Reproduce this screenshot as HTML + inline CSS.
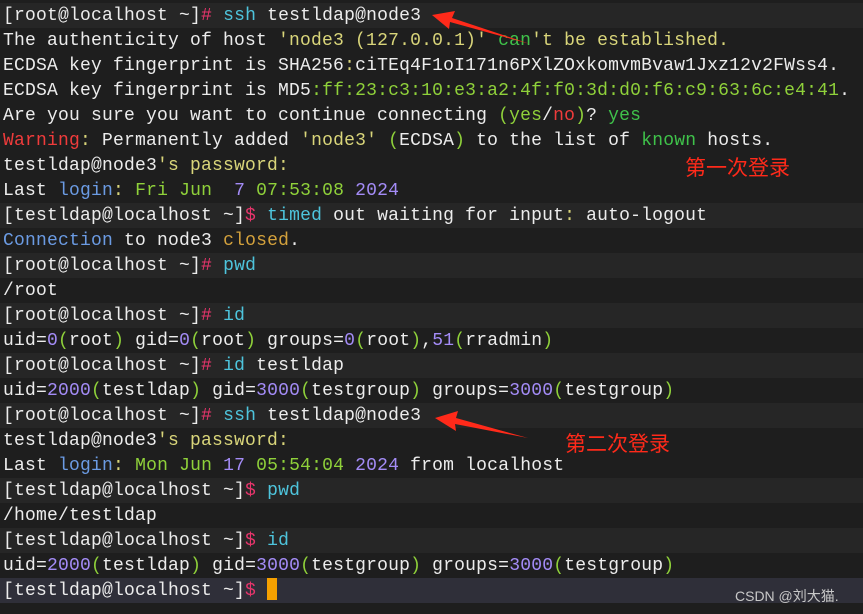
<!DOCTYPE html>
<html><head><meta charset="utf-8"><style>
body{margin:0;width:863px;height:614px;background:#1e1e1e;overflow:hidden;position:relative}
.t{position:absolute;left:0;top:3px;width:863px;font-family:"Liberation Mono",monospace;font-size:18px;letter-spacing:0.2px;color:#ececec}
.l{height:25px;line-height:26px;white-space:pre;padding-left:3px}
.b{background:#262626}
.c{background:#2f2f39}
.p{color:#e8356c}.k{color:#4ec4dc}.y{color:#d9d57a}.g{color:#8fd13a}.gr{color:#3fc24a}.r{color:#ef3b3b}.bl{color:#6b9be3}.pu{color:#a48cf7}.o{color:#d3a13c}
.cur{display:inline-block;width:10px;height:22px;background:#f5a000;vertical-align:-5px}
.cn{position:absolute;color:#ff2a1a;font-family:"Noto Sans CJK SC",sans-serif;font-size:21px;line-height:1}
.wm{position:absolute;left:735px;top:586px;color:#c8c8c8;font-family:"Liberation Sans","Noto Sans CJK SC",sans-serif;font-size:14px}
</style></head><body>
<div class="t">
<div class="l b">[root@localhost ~]<span class="p">#</span> <span class="k">ssh</span> testldap@node3</div>
<div class="l">The authenticity of host <span class="y">'node3 (127.0.0.1)'</span> <span class="gr">can</span><span class="y">'t be established.</span></div>
<div class="l">ECDSA key fingerprint is SHA256<span class="y">:</span>ciTEq4F1oI171n6PXlZOxkomvmBvaw1Jxz12v2FWss4.</div>
<div class="l">ECDSA key fingerprint is MD5<span class="g">:ff:23:c3:10:e3:a2:4f:f0:3d:d0:f6:c9:63:6c:e4:41</span>.</div>
<div class="l">Are you sure you want to continue connecting <span class="g">(yes</span>/<span class="r">no</span><span class="g">)</span>? <span class="gr">yes</span></div>
<div class="l"><span class="r">Warning</span><span class="y">:</span> Permanently added <span class="y">'node3'</span> <span class="g">(</span>ECDSA<span class="g">)</span> to the list of <span class="gr">known</span> hosts.</div>
<div class="l">testldap@node3<span class="y">'s password:</span></div>
<div class="l">Last <span class="bl">login</span><span class="y">:</span> <span class="g">Fri Jun</span>  <span class="pu">7</span> <span class="g">07:53:08</span> <span class="pu">2024</span></div>
<div class="l b">[testldap@localhost ~]<span class="p">$</span> <span class="k">timed</span> out waiting for input<span class="y">:</span> auto-logout</div>
<div class="l"><span class="bl">Connection</span> to node3 <span class="o">closed</span>.</div>
<div class="l b">[root@localhost ~]<span class="p">#</span> <span class="k">pwd</span></div>
<div class="l">/root</div>
<div class="l b">[root@localhost ~]<span class="p">#</span> <span class="k">id</span></div>
<div class="l">uid=<span class="pu">0</span><span class="g">(</span>root<span class="g">)</span> gid=<span class="pu">0</span><span class="g">(</span>root<span class="g">)</span> groups=<span class="pu">0</span><span class="g">(</span>root<span class="g">)</span>,<span class="pu">51</span><span class="g">(</span>rradmin<span class="g">)</span></div>
<div class="l b">[root@localhost ~]<span class="p">#</span> <span class="k">id</span> testldap</div>
<div class="l">uid=<span class="pu">2000</span><span class="g">(</span>testldap<span class="g">)</span> gid=<span class="pu">3000</span><span class="g">(</span>testgroup<span class="g">)</span> groups=<span class="pu">3000</span><span class="g">(</span>testgroup<span class="g">)</span></div>
<div class="l b">[root@localhost ~]<span class="p">#</span> <span class="k">ssh</span> testldap@node3</div>
<div class="l">testldap@node3<span class="y">'s password:</span></div>
<div class="l">Last <span class="bl">login</span><span class="y">:</span> <span class="g">Mon Jun</span> <span class="pu">17</span> <span class="g">05:54:04</span> <span class="pu">2024</span> from localhost</div>
<div class="l b">[testldap@localhost ~]<span class="p">$</span> <span class="k">pwd</span></div>
<div class="l">/home/testldap</div>
<div class="l b">[testldap@localhost ~]<span class="p">$</span> <span class="k">id</span></div>
<div class="l">uid=<span class="pu">2000</span><span class="g">(</span>testldap<span class="g">)</span> gid=<span class="pu">3000</span><span class="g">(</span>testgroup<span class="g">)</span> groups=<span class="pu">3000</span><span class="g">(</span>testgroup<span class="g">)</span></div>
<div class="l c">[testldap@localhost ~]<span class="p">$</span> <span class="cur"></span></div>
</div>
<svg width="863" height="614" style="position:absolute;left:0;top:0">
<polygon points="432,15 455,11 452,18 530,44 450,22 449,29" fill="#ff2a1a"/>
<polygon points="435,418 458,411 456,418 528,438 455,424 456,431" fill="#ff2a1a"/>
</svg>
<div class="cn" style="left:685px;top:157px">第一次登录</div>
<div class="cn" style="left:565px;top:433px">第二次登录</div>
<div class="wm">CSDN @刘大猫.</div>
</body></html>
